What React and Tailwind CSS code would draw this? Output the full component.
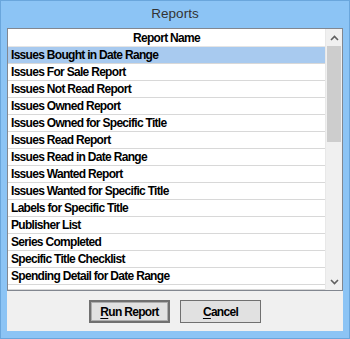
import React from "react";

const reports = [
  "Issues Bought in Date Range",
  "Issues For Sale Report",
  "Issues Not Read Report",
  "Issues Owned Report",
  "Issues Owned for Specific Title",
  "Issues Read Report",
  "Issues Read in Date Range",
  "Issues Wanted Report",
  "Issues Wanted for Specific Title",
  "Labels for Specific Title",
  "Publisher List",
  "Series Completed",
  "Specific Title Checklist",
  "Spending Detail for Date Range",
];

function Chevron({ up }) {
  return (
    <svg width="9" height="6" viewBox="0 0 9 6" className="block">
      <path
        d={up ? "M1 5 L4.5 1.5 L8 5" : "M1 1 L4.5 4.5 L8 1"}
        fill="none"
        stroke="#606060"
        strokeWidth="1.6"
      />
    </svg>
  );
}

function DialogButton({ mnemonic, rest, isDefault }) {
  return (
    <button
      className={
        "w-[81px] h-[23px] bg-[#e1e1e1] text-[12px] font-bold tracking-[-0.7px] text-black flex items-center justify-center " +
        (isDefault
          ? "border-2 border-[#707070] shadow-[inset_0_0_0_1px_#adadad]"
          : "border border-[#707070]")
      }
    >
      <span className="underline underline-offset-2">{mnemonic}</span>
      {rest}
    </button>
  );
}

export default function App() {
  return (
    <div
      className="w-[350px] h-[339px] bg-[#8cc4f5] border border-[#6aa6dc] flex flex-col"
      style={{ fontFamily: '"Liberation Sans", Arial, sans-serif' }}
    >
      {/* title bar */}
      <div className="h-[27px] flex items-center justify-center">
        <span className="text-[13.5px] text-[#333333]">Reports</span>
      </div>

      {/* client area */}
      <div className="mx-[6px] mb-[7px] flex-1 bg-[#f0f0f0] flex flex-col">
        <div className="h-[263px] border border-[#828790] bg-white flex">
          <div className="flex-1 flex flex-col overflow-hidden">
            <div className="h-[18px] shrink-0 border-b border-[#e5e5e5] flex items-center justify-center text-[12px] font-bold tracking-[-0.7px] text-black">
              Report Name
            </div>
            {reports.map((name, i) => (
              <div
                key={name}
                className={
                  "h-[17px] shrink-0 border-b border-[#d8d8d8] pl-[3px] flex items-center text-[12px] font-bold tracking-[-0.7px] text-black whitespace-nowrap " +
                  (i === 0 ? "bg-[#a8caef]" : "")
                }
              >
                {name}
              </div>
            ))}
            <div className="flex-1 border-b border-[#d8d8d8] bg-white" />
          </div>

          {/* scrollbar */}
          <div className="w-[17px] bg-[#f0f0f0] flex flex-col border-l border-[#e8e8e8]">
            <div className="h-[17px] flex items-center justify-center">
              <Chevron up />
            </div>
            <div className="mx-[1px] h-[96px] bg-[#cdcdcd]" />
            <div className="flex-1" />
            <div className="h-[17px] flex items-center justify-center">
              <Chevron />
            </div>
          </div>
        </div>

        <div className="flex-1 flex items-center justify-center gap-[10px] pt-[1px]">
          <DialogButton mnemonic="R" rest="un Report" isDefault />
          <DialogButton mnemonic="C" rest="ancel" />
        </div>
      </div>
    </div>
  );
}
